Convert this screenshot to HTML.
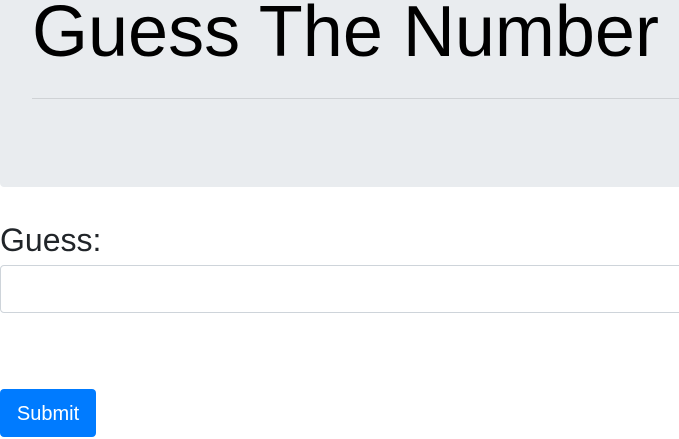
<!DOCTYPE html>
<html><head><style>
body{margin:0;width:679px;height:438px;overflow:hidden;background:#fff;font-family:"Liberation Sans",sans-serif;color:#212529}
.j{position:absolute;left:0;top:-20px;width:700px;height:207px;background:#e9ecef;border-radius:0 0 0 4px}
h1{position:absolute;left:32px;top:-18px;margin:0;font-weight:300;font-size:72px;line-height:100px;color:#000;white-space:nowrap}
.hr{position:absolute;left:32px;top:98px;width:660px;height:1px;background:#cfd2d5}
label{position:absolute;left:0;top:220px;font-size:32px;line-height:40px}
.in{position:absolute;left:0;top:265px;width:700px;border:1px solid #ced4da;border-radius:4px;box-sizing:border-box;height:48px}
.b{position:absolute;left:0;top:389px;width:96px;height:48px;background:#007bff;border-radius:4px;color:#fff;font-size:20px;line-height:50px;text-align:center}
</style></head><body>
<div class="j"></div>
<h1>Guess The Number</h1>
<div class="hr"></div>
<label>Guess:</label>
<div class="in"></div>
<div class="b">Submit</div>
</body></html>
